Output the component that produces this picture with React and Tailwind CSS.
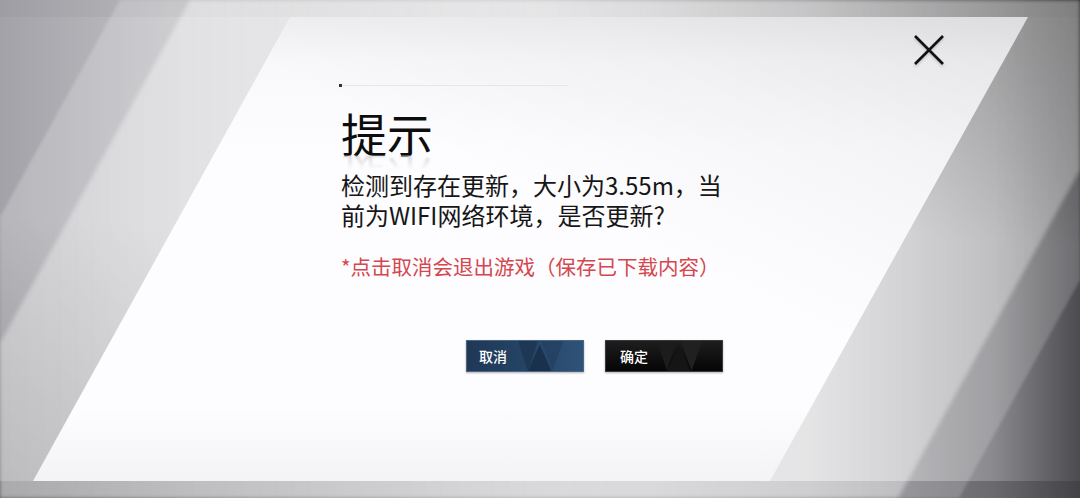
import React from "react";

const FONT = "[font-family:'Noto_Sans_CJK_SC','Noto_Sans',sans-serif]";

function Triangles({ dark }) {
  return (
    <svg
      className="absolute inset-0 h-full w-full"
      viewBox="0 0 118 32"
      preserveAspectRatio="none"
    >
      {dark ? (
        <g>
          <polygon points="52,0 72,0 62,32" fill="#1c1c1c" />
          <polygon points="62,32 74,4 86,32" fill="#151515" />
          <polygon points="76,0 98,0 87,32" fill="#202020" />
        </g>
      ) : (
        <g>
          <polygon points="52,0 72,0 62,32" fill="#1b324d" opacity="0.7" />
          <polygon points="62,32 74,4 86,32" fill="#172c45" opacity="0.8" />
          <polygon points="76,0 98,0 87,32" fill="#22405f" opacity="0.7" />
        </g>
      )}
    </svg>
  );
}

export default function App() {
  return (
    <div className={`grid h-[498px] w-[1080px] overflow-hidden ${FONT}`}>
      {/* base background */}
      <div className="[grid-area:1/1] bg-[linear-gradient(90deg,#a2a2a8_0%,#c4c4c8_18%,#d2d2d6_45%,#c6c6ca_75%,#8a8a8e_92%,#4c4c50_100%)]" />
      <div className="[grid-area:1/1] bg-[radial-gradient(ellipse_at_100%_0%,rgba(0,0,0,0.55),transparent_35%)]" />
      <div className="[grid-area:1/1] bg-[radial-gradient(ellipse_at_0%_100%,rgba(0,0,0,0.25),transparent_40%)]" />
      {/* stripes (soft edges) */}
      <div className="[grid-area:1/1] blur-[1.5px]">
        <div className="h-full w-full bg-[linear-gradient(90deg,rgba(255,255,255,0.22),rgba(255,255,255,0.18))] [clip-path:polygon(120px_0,1080px_0,1080px_280px,959px_498px,0_498px,0_217px)]" />
      </div>
      <div className="[grid-area:1/1] blur-[2px]">
        <div className="h-full w-full bg-[linear-gradient(90deg,rgba(255,255,255,0.35),rgba(255,255,255,0.5)_60%,rgba(255,255,255,0.3))] [clip-path:polygon(190px_0,1080px_0,1080px_170px,898px_498px,0_498px,0_343px)]" />
      </div>
      {/* top & bottom bands */}
      <div className="[grid-area:1/1] flex flex-col">
        <div className="h-[17px] bg-[linear-gradient(90deg,rgba(0,0,0,0.03),rgba(0,0,0,0.07)_50%,rgba(0,0,0,0.12))]" />
        <div className="flex-1" />
        <div className="h-[17px] bg-[linear-gradient(90deg,rgba(50,50,56,0.45),rgba(70,70,76,0.28)_50%,rgba(50,50,56,0.4))]" />
      </div>
      {/* panel */}
      <div className="[grid-area:1/1] bg-[linear-gradient(180deg,#ececef_0%,#f8f8fa_12%,#fdfcfe_30%,#fdfcfe_82%,#f1f1f3_100%)] [clip-path:polygon(290px_17px,1028px_17px,770px_481px,33px_481px)]" />
      <div className="[grid-area:1/1] bg-[linear-gradient(205deg,rgba(0,0,0,0.09)_0%,rgba(0,0,0,0.03)_25%,transparent_45%)] [clip-path:polygon(290px_17px,1028px_17px,770px_481px,33px_481px)]" />

      {/* content */}
      <div className="relative z-10 [grid-area:1/1] flex flex-col pl-[341px]">
        <div className="flex justify-end pr-[136px] pt-[35px]">
          <svg width="30" height="30" viewBox="0 0 30 30" className="[filter:drop-shadow(0_2px_1px_rgba(0,0,0,0.15))]">
            <line x1="1" y1="1" x2="29" y2="29" stroke="#111" strokeWidth="2.6" />
            <line x1="29" y1="1" x2="1" y2="29" stroke="#111" strokeWidth="2.6" />
          </svg>
        </div>
        <div className="-ml-[2px] mt-[19px] flex h-[3px] w-[229px] items-center">
          <div className="h-[3px] w-[3px] bg-[#333]" />
          <div className="h-px flex-1 bg-[#e6e6ea]" />
        </div>
        <div className="mt-[22px] text-[46px] leading-[46px] text-[#0d0d0d]">提示</div>
        <div className="h-[15px] overflow-hidden [mask-image:linear-gradient(to_bottom,rgba(0,0,0,1),rgba(0,0,0,0))]">
          <div className="-scale-y-100 text-[46px] leading-[46px] text-[#b0b0b0] opacity-50 blur-[1px]">
            提示
          </div>
        </div>
        <div className="text-[24px] leading-[30px] text-[#161616]">
          <div>检测到存在更新，大小为3.55m，当</div>
          <div>前为WIFI网络环境，是否更新?</div>
        </div>
        <div className="mt-[24px] text-[20.5px] leading-[24px] text-[#d4474e]">
          *点击取消会退出游戏（保存已下载内容）
        </div>
        <div className="ml-[125px] mt-[62px] flex gap-[21px]">
          <div className="relative flex h-[32px] w-[118px] items-center overflow-hidden border border-[#4a6684] bg-[linear-gradient(90deg,#1f3856,#264668_60%,#2f5378)] pl-[12px] shadow-[0_1px_2px_rgba(0,0,0,0.3)]">
            <Triangles />
            <span className="relative text-[14px] font-medium text-white">取消</span>
          </div>
          <div className="relative flex h-[32px] w-[118px] items-center overflow-hidden border border-[#3a3a3a] bg-[linear-gradient(180deg,#1e1e1e,#050505)] pl-[14px] shadow-[0_1px_2px_rgba(0,0,0,0.3)]">
            <Triangles dark />
            <span className="relative text-[14px] font-medium text-white">确定</span>
          </div>
        </div>
      </div>
    </div>
  );
}
